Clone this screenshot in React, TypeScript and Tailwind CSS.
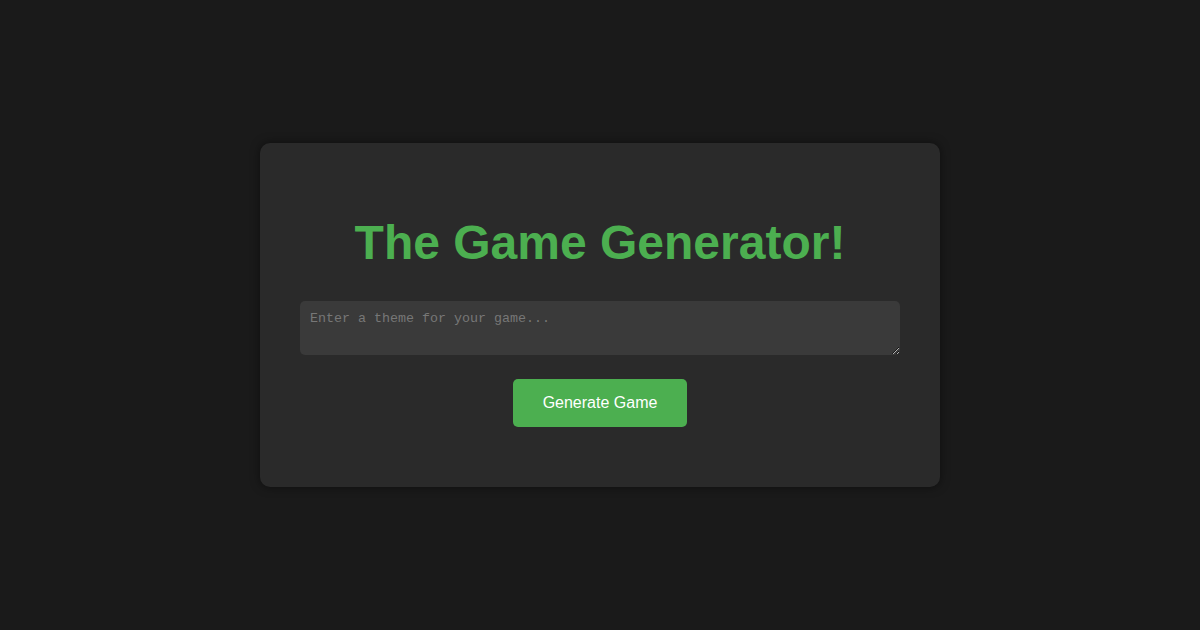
import React, { useState } from 'react';

const App: React.FC = () => {
  const [theme, setTheme] = useState('');

  return (
    <div className="min-h-screen w-full bg-[#1a1a1a] flex items-center justify-center font-['Liberation_Sans',Arial,sans-serif]">
      {/* Generator card */}
      <div className="w-[680px] bg-[#2a2a2a] rounded-[10px] p-10 flex flex-col items-center shadow-[0_0_10px_rgba(0,0,0,0.5)]">
        <h1 className="mt-8 mb-[31px] text-[48px] leading-[55px] font-bold text-[#4caf50] text-center">
          The Game Generator!
        </h1>

        <textarea
          value={theme}
          onChange={(e) => setTheme(e.target.value)}
          placeholder="Enter a theme for your game..."
          className="w-[600px] h-[54px] px-[10px] py-[10px] bg-[#3a3a3a] text-[#e0e0e0] rounded-[5px] text-[13.33px] leading-[15px] font-['Liberation_Mono','Courier_New',monospace] placeholder:text-[#777] outline-none"
        />

        <button className="mt-6 mb-5 px-[30px] py-[15px] bg-[#4caf50] hover:bg-[#45a049] text-white text-[16px] leading-[18px] rounded-[5px] cursor-pointer">
          Generate Game
        </button>
      </div>
    </div>
  );
};

export default App;
